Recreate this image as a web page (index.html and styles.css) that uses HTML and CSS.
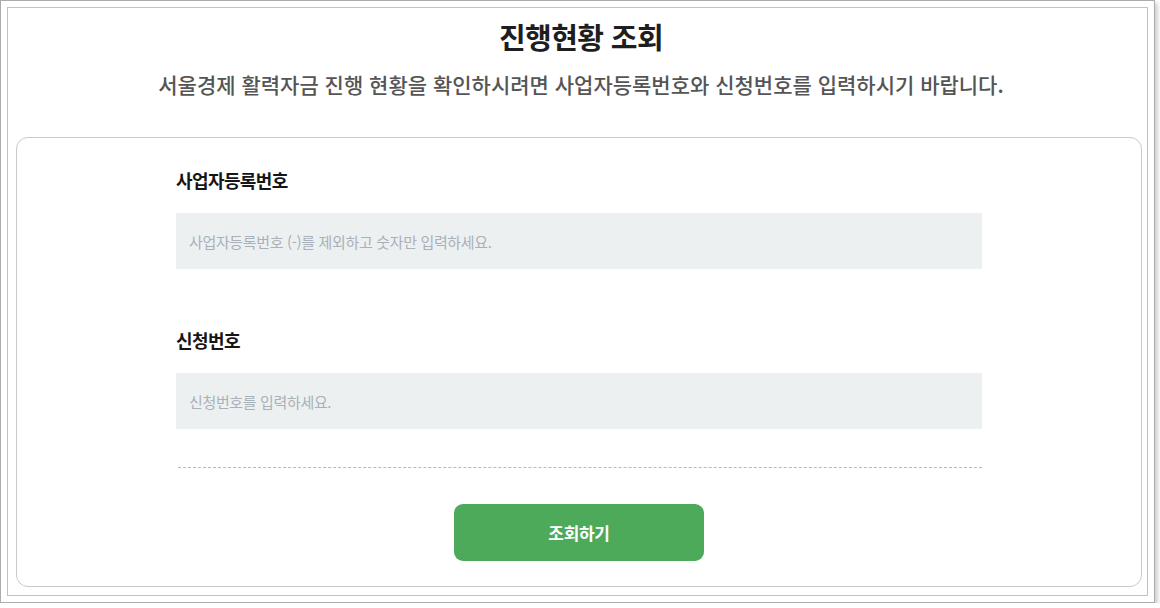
FILE: index.html
```html
<!DOCTYPE html>
<html lang="ko">
<head>
<title>진행현황 조회</title>
<meta charset="utf-8">
<link rel="stylesheet" href="styles.css">
</head>
<body>

<div class="frame">
  <div class="frame-inner">

    <div class="head">
      <h1 class="title">진행현황 조회</h1>
      <p class="desc">서울경제 활력자금 진행 현황을 확인하시려면 사업자등록번호와 신청번호를 입력하시기 바랍니다.</p>
    </div>

    <div class="card">
      <form class="form">
        <div class="field">
          <label class="label" for="bizno">사업자등록번호</label>
          <input class="input" id="bizno" type="text" placeholder="사업자등록번호 (-)를 제외하고 숫자만 입력하세요.">
        </div>
        <div class="field">
          <label class="label" for="reqno">신청번호</label>
          <input class="input" id="reqno" type="text" placeholder="신청번호를 입력하세요.">
        </div>
        <div class="divider"></div>
        <div class="btn-row">
          <button class="btn" type="button">조회하기</button>
        </div>
      </form>
    </div>

  </div>
</div>

</body>
</html>
```

FILE: styles.css
```css
body {
  margin: 0;
  background-color: white;
  font-family: "Noto Sans CJK KR", "Noto Sans", sans-serif;
}

.frame {
  box-sizing: border-box;
  width: 1155px;
  height: 603px;
  padding: 6px;
  border: 1px solid #ababab;
  background-color: white;
  box-shadow: 3px 3px 4px rgba(0, 0, 0, 0.18);
}

.frame-inner {
  box-sizing: border-box;
  height: 100%;
  border: 1px solid #c2c2c2;
  padding: 0 5px 8px 8px;
  display: flex;
  flex-direction: column;
}

.head {
  text-align: center;
  padding-top: 8px;
  padding-left: 4px;
}

.title {
  margin: 0;
  font-size: 29px;
  line-height: 40px;
  font-weight: bold;
  color: #1e1e1e;
  letter-spacing: -0.6px;
}

.desc {
  margin: 13px 0 0 0;
  font-size: 21px;
  line-height: 30px;
  font-weight: 500;
  color: #555555;
  letter-spacing: 0;
}

.card {
  margin-top: 38px;
  flex: 1;
  border: 1px solid #c9c9d0;
  border-radius: 12px;
}

.form {
  width: 806px;
  margin: 0 auto;
  padding-top: 29px;
}

.field {
  display: flex;
  flex-direction: column;
  gap: 20px;
}

.field + .field {
  margin-top: 58px;
}

.label {
  font-size: 18px;
  line-height: 26px;
  font-weight: bold;
  color: #161616;
  letter-spacing: -0.6px;
}

.input {
  box-sizing: border-box;
  height: 56px;
  padding: 0 13px;
  border: none;
  background-color: #edf0f1;
  font-family: inherit;
  font-size: 15px;
  letter-spacing: -0.35px;
  color: #333;
  outline: none;
}

.input::placeholder {
  color: #a9b0b8;
}

.divider {
  margin-top: 38px;
  margin-left: 2px;
  border-top: 1px dashed #b9b9b9;
}

.btn-row {
  display: flex;
  justify-content: center;
  margin-top: 36px;
}

.btn {
  width: 250px;
  height: 57px;
  border: none;
  border-radius: 9px;
  background-color: #4caa5a;
  color: white;
  font-family: inherit;
  font-size: 17px;
  font-weight: bold;
  letter-spacing: -0.3px;
}
```
